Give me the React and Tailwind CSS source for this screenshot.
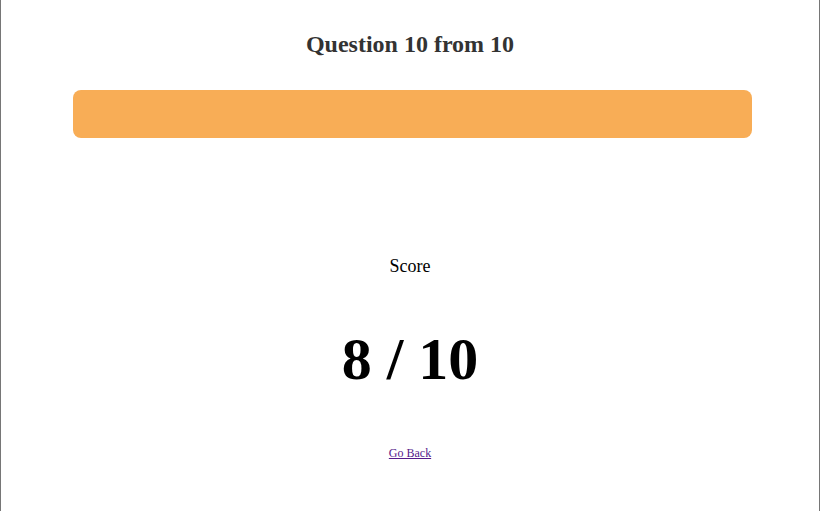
export default function App() {
  return (
    <div className="h-[511px] w-[820px] border-x border-[#767676] bg-white text-center" style={{ fontFamily: '"Liberation Serif", "Times New Roman", serif' }}>
      <div className="pt-[30px] text-[24px] font-bold leading-[28px] text-[#333333]">Question 10 from 10</div>
      <div className="ml-[72px] mt-[32px] h-[48px] w-[679px] rounded-[8px] bg-[#f8ad56]"></div>
      <div className="mt-[117px] text-[18px] leading-[22px] text-black">Score</div>
      <div className="mt-[47px] text-[60px] font-bold leading-[70px] text-black">8 / 10</div>
      <div className="mt-[52px] text-[12px] leading-[14px]">
        <a href="#" className="text-[#551a8b] underline">Go Back</a>
      </div>
    </div>
  );
}
